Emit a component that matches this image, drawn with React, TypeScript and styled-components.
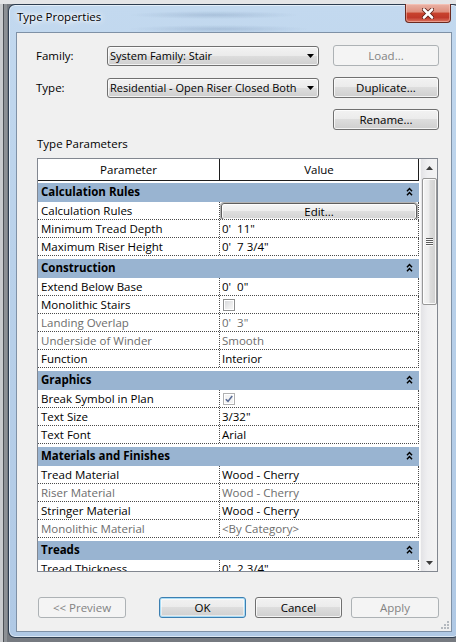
import React from "react";
import styled, { createGlobalStyle } from "styled-components";

type Row = {
  name: string;
  value?: string;
  kind?: "text" | "button" | "check";
  checked?: boolean;
  disabled?: boolean;
};

type Group = { title: string; rows: Row[] };

const groups: Group[] = [
  {
    title: "Calculation Rules",
    rows: [
      { name: "Calculation Rules", kind: "button", value: "Edit..." },
      { name: "Minimum Tread Depth", value: "0'  11\"" },
      { name: "Maximum Riser Height", value: "0'  7 3/4\"" },
    ],
  },
  {
    title: "Construction",
    rows: [
      { name: "Extend Below Base", value: "0'  0\"" },
      { name: "Monolithic Stairs", kind: "check", checked: false },
      { name: "Landing Overlap", value: "0'  3\"", disabled: true },
      { name: "Underside of Winder", value: "Smooth", disabled: true },
      { name: "Function", value: "Interior" },
    ],
  },
  {
    title: "Graphics",
    rows: [
      { name: "Break Symbol in Plan", kind: "check", checked: true },
      { name: "Text Size", value: "3/32\"" },
      { name: "Text Font", value: "Arial" },
    ],
  },
  {
    title: "Materials and Finishes",
    rows: [
      { name: "Tread Material", value: "Wood - Cherry" },
      { name: "Riser Material", value: "Wood - Cherry", disabled: true },
      { name: "Stringer Material", value: "Wood - Cherry" },
      { name: "Monolithic Material", value: "<By Category>", disabled: true },
    ],
  },
  {
    title: "Treads",
    rows: [{ name: "Tread Thickness", value: "0'  2 3/4\"" }],
  },
];

const GlobalStyle = createGlobalStyle`
  html, body {
    margin: 0;
    padding: 0;
  }
  body {
    width: 456px;
    height: 642px;
    overflow: hidden;
    background:
      linear-gradient(180deg, #e4e5e7 0, #e4e5e7 4px, transparent 4px),
      linear-gradient(90deg, #c9cbce 0, #c9cbce 3px, #4d5156 3px, #4d5156 4px, #8c9095 4px, #8c9095 7px, transparent 7px),
      #767a80;
    font-family: "Open Sans", "Noto Sans", sans-serif;
    font-size: 11.5px;
    color: #000;
  }
`;

const Window = styled.div`
  margin: 4px 0 0 8px;
  width: 452px;
  height: 634px;
  box-sizing: border-box;
  border: 1px solid rgba(22, 36, 54, 0.85);
  border-radius: 7px;
  padding: 0 7px 5px 7px;
  display: flex;
  flex-direction: column;
  background:
    radial-gradient(ellipse 85px 4px at 205px 10px, rgba(70, 100, 140, 0.2), transparent),
    radial-gradient(ellipse 90px 4px at 210px 24px, rgba(70, 100, 140, 0.2), transparent),
    linear-gradient(180deg, #c3d9ef 0%, #b9d1ea 40%, #b0c9e5 100%);
  box-shadow: inset 0 0 0 1px rgba(255, 255, 255, 0.55);
`;

const TitleBar = styled.div`
  height: 27px;
  display: flex;
  align-items: flex-start;
`;

const Caption = styled.div`
  padding: 4px 0 0 1px;
  line-height: 16px;
  text-shadow: 0 0 6px #fff, 0 0 10px #fff, 0 0 3px #fff;
`;

const CloseButton = styled.div`
  margin: -1px 1px 0 auto;
  width: 46px;
  height: 19px;
  box-sizing: border-box;
  border: 1px solid #6b2a20;
  border-top: none;
  border-radius: 0 0 4px 4px;
  display: flex;
  align-items: center;
  justify-content: center;
  background: linear-gradient(
    180deg,
    #eab3a6 0%,
    #df8f7d 45%,
    #c8432d 50%,
    #c0392a 75%,
    #dc7561 100%
  );
  box-shadow: inset 0 0 0 1px rgba(255, 210, 200, 0.45);
`;

const Client = styled.div`
  position: relative;
  width: 436px;
  height: 600px;
  box-sizing: border-box;
  border: 1px solid #7f91a6;
  background: #f0f0f0;
  padding: 12px 0 0 19px;
  display: flex;
  flex-direction: column;
`;

const TopGrid = styled.div`
  display: grid;
  grid-template-columns: 71px 226px 106px;
  grid-auto-rows: 21px;
  row-gap: 11px;
  align-items: center;
`;

const FieldLabel = styled.div`
  line-height: 16px;
`;

const Combo = styled.div`
  width: 212px;
  height: 20px;
  box-sizing: border-box;
  border: 1px solid #707070;
  border-radius: 3px;
  padding: 0 4px 0 2px;
  display: flex;
  align-items: center;
  justify-content: space-between;
  background: linear-gradient(180deg, #f2f2f2 0%, #ebebeb 49%, #dddddd 50%, #cfcfcf 100%);
  box-shadow: inset 0 0 0 1px rgba(255, 255, 255, 0.75);
`;

const ComboText = styled.span`
  font-size: 11px;
  line-height: 16px;
  white-space: nowrap;
`;

const DialogButton = styled.div<{ $width: number; $disabled?: boolean; $default?: boolean; $col?: number }>`
  width: ${(p) => p.$width}px;
  height: 21px;
  box-sizing: border-box;
  border-radius: 3px;
  display: flex;
  align-items: center;
  justify-content: center;
  line-height: 16px;
  grid-column: ${(p) => p.$col ?? "auto"};
  border: 1px solid ${(p) => (p.$disabled ? "#adb2b5" : p.$default ? "#3c7fb1" : "#707070")};
  color: ${(p) => (p.$disabled ? "#838383" : "#000")};
  background: ${(p) =>
    p.$disabled
      ? "#f4f4f4"
      : "linear-gradient(180deg, #f2f2f2 0%, #ebebeb 49%, #dddddd 50%, #cfcfcf 100%)"};
  box-shadow: ${(p) =>
    p.$default
      ? "inset 0 0 0 1px #a9dcf6, inset 0 0 0 2px rgba(255,255,255,0.5)"
      : p.$disabled
      ? "none"
      : "inset 0 0 0 1px rgba(255,255,255,0.75)"};
`;

const SectionLabel = styled.div`
  margin: 6px 0 6px 1px;
  line-height: 16px;
`;

const PropertyTable = styled.div`
  margin-left: 1px;
  width: 401px;
  height: 414px;
  box-sizing: border-box;
  border: 1px solid #828790;
  background: #fff;
  display: flex;
`;

const GridArea = styled.div`
  width: 382px;
  overflow: hidden;
  display: flex;
  flex-direction: column;
`;

const HeaderRow = styled.div`
  flex: none;
  width: 381px;
  height: 22px;
  box-sizing: border-box;
  border-bottom: 1px solid #1e1e1e;
  display: flex;
`;

const HeaderCell = styled.div<{ $width?: number }>`
  ${(p) => (p.$width ? `width: ${p.$width}px;` : "flex: 1;")}
  box-sizing: border-box;
  border-right: 1px solid #1e1e1e;
  text-align: center;
  line-height: 21px;
`;

const Body = styled.div`
  padding-top: 2px;
  display: flex;
  flex-direction: column;
`;

const GroupBlock = styled.div`
  margin-bottom: 3px;
`;

const GroupHeader = styled.div`
  width: 381px;
  height: 19px;
  box-sizing: border-box;
  padding: 0 6px 2px 3px;
  background: #99b4d1;
  display: flex;
  align-items: center;
  justify-content: space-between;
  font-weight: 700;
  line-height: 17px;
`;

const PropRow = styled.div`
  width: 381px;
  height: 18px;
  box-sizing: border-box;
  border-bottom: 1px dotted #4a4a4a;
  border-right: 1px dotted #4a4a4a;
  display: flex;
`;

const NameCell = styled.div<{ $disabled?: boolean }>`
  width: 182px;
  box-sizing: border-box;
  border-right: 1px dotted #4a4a4a;
  padding-left: 3px;
  line-height: 17px;
  white-space: nowrap;
  overflow: hidden;
  color: ${(p) => (p.$disabled ? "#6d6d6d" : "#000")};
`;

const ValueCell = styled.div<{ $disabled?: boolean }>`
  flex: 1;
  display: flex;
  padding-left: 2px;
  line-height: 17px;
  white-space: pre;
  overflow: hidden;
  color: ${(p) => (p.$disabled ? "#6d6d6d" : "#000")};
`;

const CellButton = styled.div`
  flex: 1;
  height: 17px;
  margin: 1px 1px 0 -1px;
  box-sizing: border-box;
  border: 1px solid #5e5e5e;
  border-radius: 3px;
  display: flex;
  align-items: center;
  justify-content: center;
  line-height: 15px;
  background: linear-gradient(180deg, #f6f6f6 0%, #ececec 49%, #dedede 50%, #d3d3d3 100%);
  box-shadow: inset 0 0 0 1px rgba(255, 255, 255, 0.8), 0 0 0 1px #b4b4b4;
`;

const Checkbox = styled.div<{ $checked?: boolean }>`
  width: 12px;
  height: 12px;
  margin: 3px 0 0 1px;
  box-sizing: border-box;
  border: 1px solid ${(p) => (p.$checked ? "#b1b1b1" : "#8e8f8f")};
  display: flex;
  align-items: center;
  justify-content: center;
  background: ${(p) =>
    p.$checked ? "#f4f4f4" : "linear-gradient(135deg, #d4d6d9 0%, #eeeeee 60%, #f8f8f8 100%)"};
  box-shadow: inset 0 0 0 1px #fff;
`;

const ScrollBar = styled.div`
  width: 17px;
  display: flex;
  flex-direction: column;
  background: linear-gradient(90deg, #e3e3e6 0%, #efeff1 40%, #f3f3f3 100%);
  border-left: 1px solid #f7f7f7;
  box-sizing: border-box;
`;

const ScrollButton = styled.div`
  flex: none;
  height: 17px;
  display: flex;
  align-items: center;
  justify-content: center;
`;

const Thumb = styled.div`
  flex: none;
  margin: 2px 0 0 1px;
  width: 15px;
  height: 127px;
  box-sizing: border-box;
  border: 1px solid #979797;
  border-radius: 2px;
  display: flex;
  align-items: center;
  justify-content: center;
  background: linear-gradient(90deg, #f4f4f4 0%, #ececec 45%, #dcdcdc 55%, #d0d0d0 100%);
  box-shadow: inset 0 0 0 1px rgba(255, 255, 255, 0.8);
`;

const Grip = styled.div`
  width: 7px;
  height: 8px;
  background: repeating-linear-gradient(180deg, #5b5b5b 0, #5b5b5b 1px, #fbfbfb 1px, #fbfbfb 2px);
`;

const Track = styled.div`
  flex: 1;
`;

const ButtonRow = styled.div`
  margin: 25px 0 0 2px;
  width: 401px;
  display: flex;
  gap: 9px;
`;

const Spacer = styled.div`
  flex: 1;
`;

const SizeGrip = styled.svg`
  position: absolute;
  right: 2px;
  bottom: 2px;
`;

function Chevrons() {
  return (
    <svg width="7" height="9" viewBox="0 0 7 9">
      <path d="M1 4.2 L3.5 1.5 L6 4.2 M1 8.2 L3.5 5.5 L6 8.2" stroke="#000" strokeWidth="1.5" fill="none" />
    </svg>
  );
}

function Arrow({ up, color = "#000" }: { up?: boolean; color?: string }) {
  return (
    <svg width="7" height="4" viewBox="0 0 7 4">
      <polygon points={up ? "0,4 7,4 3.5,0" : "0,0 7,0 3.5,4"} fill={color} />
    </svg>
  );
}

function PropertyRow({ row }: { row: Row }) {
  let value: React.ReactNode = row.value;
  if (row.kind === "button") value = <CellButton>{row.value}</CellButton>;
  if (row.kind === "check")
    value = (
      <Checkbox $checked={row.checked}>
        {row.checked && (
          <svg width="8" height="8" viewBox="0 0 8 8">
            <path d="M0.8 4.2 L3 6.4 L7.2 1" stroke="#5a6c95" strokeWidth="1.6" fill="none" />
          </svg>
        )}
      </Checkbox>
    );
  return (
    <PropRow>
      <NameCell $disabled={row.disabled}>{row.name}</NameCell>
      <ValueCell $disabled={row.disabled}>{value}</ValueCell>
    </PropRow>
  );
}

export default function App() {
  return (
    <>
      <GlobalStyle />
      <Window>
        <TitleBar>
          <Caption>Type Properties</Caption>
          <CloseButton>
            <svg width="12" height="11" viewBox="0 0 12 11">
              <path d="M2 1.5 L10 9.5 M10 1.5 L2 9.5" stroke="#5a1d14" strokeWidth="4.2" strokeLinecap="round" />
              <path d="M2 1.5 L10 9.5 M10 1.5 L2 9.5" stroke="#fff" strokeWidth="2.6" strokeLinecap="round" />
            </svg>
          </CloseButton>
        </TitleBar>
        <Client>
          <TopGrid>
            <FieldLabel>Family:</FieldLabel>
            <Combo>
              <ComboText>System Family: Stair</ComboText>
              <Arrow />
            </Combo>
            <DialogButton $width={106} $disabled>
              Load...
            </DialogButton>
            <FieldLabel>Type:</FieldLabel>
            <Combo>
              <ComboText>Residential - Open Riser Closed Both</ComboText>
              <Arrow />
            </Combo>
            <DialogButton $width={106}>Duplicate...</DialogButton>
            <DialogButton $width={106} $col={3}>
              Rename...
            </DialogButton>
          </TopGrid>
          <SectionLabel>Type Parameters</SectionLabel>
          <PropertyTable>
            <GridArea>
              <HeaderRow>
                <HeaderCell $width={182}>Parameter</HeaderCell>
                <HeaderCell>Value</HeaderCell>
              </HeaderRow>
              <Body>
                {groups.map((g) => (
                  <GroupBlock key={g.title}>
                    <GroupHeader>
                      <span>{g.title}</span>
                      <Chevrons />
                    </GroupHeader>
                    {g.rows.map((r) => (
                      <PropertyRow key={g.title + r.name} row={r} />
                    ))}
                  </GroupBlock>
                ))}
              </Body>
            </GridArea>
            <ScrollBar>
              <ScrollButton>
                <Arrow up color="#3c3c3c" />
              </ScrollButton>
              <Thumb>
                <Grip />
              </Thumb>
              <Track />
              <ScrollButton>
                <Arrow color="#3c3c3c" />
              </ScrollButton>
            </ScrollBar>
          </PropertyTable>
          <ButtonRow>
            <DialogButton $width={88} $disabled>
              &lt;&lt; Preview
            </DialogButton>
            <Spacer />
            <DialogButton $width={87} $default>
              OK
            </DialogButton>
            <DialogButton $width={87}>Cancel</DialogButton>
            <DialogButton $width={88} $disabled>
              Apply
            </DialogButton>
          </ButtonRow>
          <SizeGrip width="8" height="8" viewBox="0 0 8 8">
            {[
              [6, 0],
              [6, 3],
              [3, 3],
              [6, 6],
              [3, 6],
              [0, 6],
            ].map(([x, y]) => (
              <rect key={`${x}-${y}`} x={x} y={y} width="2" height="2" fill="#b4b9bf" />
            ))}
          </SizeGrip>
        </Client>
      </Window>
    </>
  );
}
